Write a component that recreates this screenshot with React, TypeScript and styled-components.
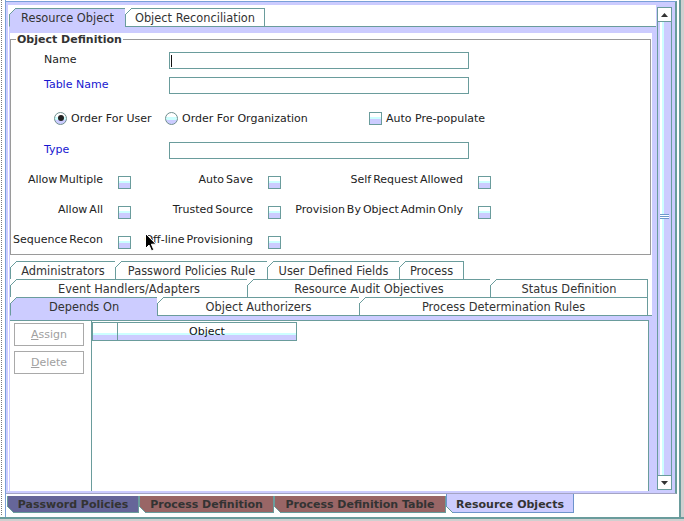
import React from 'react'
import styled, { createGlobalStyle } from 'styled-components'

const TEAL = '#6a9c9c'
const LAV = '#ccccff'
const CYAN = '#ccffff'
const BLUE = '#7aa0d8'
const ROSE = '#996666'
const SLATE = '#666699'

const GlobalStyle = createGlobalStyle`
  html, body { margin: 0; padding: 0; background: #d0d0d0; }
  body {
    font-family: 'DejaVu Sans', 'Liberation Sans', sans-serif;
    font-size: 11px;
    color: #222;
  }
`

const Screen = styled.div`
  position: relative;
  width: 684px;
  height: 521px;
  overflow: hidden;
  background: #d0d0d0;
`

const Body = styled.div`
  display: flex;
  height: 517px;
`

const Gutter = styled.div`
  width: 5px;
  background: #fff;
`

const Dots = styled.div`
  margin-left: 1px;
  width: 0;
  height: 515px;
  border-left: 1px dotted #7a7a7a;
`

const Frame = styled.div`
  box-sizing: border-box;
  width: 676px;
  border-left: 1px solid ${BLUE};
  border-right: 2px solid ${TEAL};
  background: #fff;
  display: flex;
  flex-direction: column;
`

const BottomLine = styled.div`
  height: 2px;
  background: ${TEAL};
`

const ScrollPane = styled.div`
  margin-top: 1px;
  width: 671px;
  box-sizing: border-box;
  border-top: 1px solid ${BLUE};
  border-right: 2px solid ${TEAL};
  border-bottom: 1px solid #a4a4c4;
  padding: 3px 2px 2px 2px;
  background: ${LAV};
`

const Viewport = styled.div`
  display: flex;
  height: 486px;
  background: #fff;
`

const Content = styled.div`
  width: 648px;
  height: 486px;
  overflow: hidden;
  padding-top: 3px;
  box-sizing: border-box;
`

/* ---------- tabs ---------- */

const TabRow = styled.div<{ $overlap?: boolean }>`
  display: flex;
  position: relative;
  z-index: 1;
  margin-bottom: ${p => (p.$overlap ? -1 : 0)}px;
`

const Tab = styled.div<{ $w: number; $selected?: boolean; $last?: boolean; $base?: boolean }>`
  position: relative;
  box-sizing: border-box;
  width: ${p => p.$w}px;
  height: ${p => (p.$base ? 19 : 18)}px;
  border-top: 1px solid ${TEAL};
  border-left: 1px solid ${TEAL};
  border-right: ${p => (p.$last ? `1px solid ${TEAL}` : 'none')};
  border-bottom: ${p => (p.$base ? `1px solid ${p.$selected ? LAV : TEAL}` : 'none')};
  background: ${p => (p.$selected ? LAV : '#fff')};
  display: flex;
  align-items: center;
  justify-content: center;
  font-size: 11.4px;
  color: #333;
  white-space: nowrap;
  &::before {
    content: '';
    position: absolute;
    top: -1px;
    left: -1px;
    width: 7px;
    height: 7px;
    background: linear-gradient(
      135deg,
      #fff calc(50% - 0.7px),
      ${TEAL} calc(50% - 0.7px) calc(50% + 0.5px),
      transparent calc(50% + 0.5px)
    );
  }
`

const TopTabs = styled.div`
  margin-left: 1px;
`

const Panel = styled.div<{ $band: number; $left: number; $right: number }>`
  border-top: 1px solid ${TEAL};
  background: ${LAV};
  padding: ${p => p.$band}px ${p => p.$right}px 0 ${p => p.$left}px;
`

const PanelInner = styled.div`
  background: #fff;
`

/* ---------- object definition ---------- */

const Group = styled.fieldset`
  margin: 3px 0 0 0;
  padding: 0 0 5px 0;
  width: 641px;
  box-sizing: border-box;
  min-inline-size: 0;
  border: 1px solid #9a9a9a;
`

const GroupTitle = styled.legend`
  margin-left: 5px;
  padding: 0 1px;
  font-weight: bold;
  font-size: 11px;
  line-height: 13px;
  color: #333;
`

const TextRow = styled.div<{ $top: number }>`
  display: flex;
  align-items: center;
  height: 17px;
  margin-top: ${p => p.$top}px;
`

const FieldLabel = styled.div<{ $blue?: boolean }>`
  width: 158px;
  box-sizing: border-box;
  padding-left: 33px;
  margin-top: -2px;
  color: ${p => (p.$blue ? '#1616d0' : '#222')};
`

const TextField = styled.div<{ $caret?: boolean }>`
  position: relative;
  width: 300px;
  height: 17px;
  box-sizing: border-box;
  border: 1px solid ${TEAL};
  background: #fff;
  &::after {
    content: '';
    display: ${p => (p.$caret ? 'block' : 'none')};
    position: absolute;
    left: 1px;
    top: 2px;
    width: 1px;
    height: 12px;
    background: #111;
  }
`

const OptionRow = styled.div`
  display: flex;
  align-items: center;
  height: 14px;
  margin-top: 17px;
  padding-left: 43px;
`

const Option = styled.div<{ $w?: number }>`
  display: flex;
  align-items: center;
  gap: 4px;
  width: ${p => (p.$w ? `${p.$w}px` : 'auto')};
  color: #222;
`

const Radio = styled.span<{ $on?: boolean }>`
  position: relative;
  width: 13px;
  height: 13px;
  box-sizing: border-box;
  border-radius: 50%;
  border: 1px solid #6f8f8f;
  background: linear-gradient(to bottom, #fff 0 40%, ${CYAN} 40% 60%, ${LAV} 60%);
  &::after {
    content: '';
    display: ${p => (p.$on ? 'block' : 'none')};
    position: absolute;
    left: 2.5px;
    top: 2.5px;
    width: 6px;
    height: 6px;
    border-radius: 50%;
    background: #222;
  }
`

const Check = styled.span`
  width: 13px;
  height: 13px;
  box-sizing: border-box;
  border: 1px solid ${TEAL};
  background: linear-gradient(to bottom, #fff 0 40%, ${CYAN} 40% 58%, ${LAV} 58%);
`

const CheckGrid = styled.div`
  display: grid;
  grid-template-columns: 107px 13px 137px 13px 197px 13px;
  grid-auto-rows: 13px;
  row-gap: 17px;
  margin-top: 17px;
`

const CheckLabel = styled.div`
  padding-right: 15px;
  margin-top: -3px;
  text-align: right;
  white-space: nowrap;
  word-spacing: -1.5px;
  color: #222;
  line-height: 13px;
`

/* ---------- depends on ---------- */

const LowerTabs = styled.div`
  margin-top: 6px;
`

const SplitPanel = styled.div`
  display: flex;
  height: 200px;
  border-top: 1px solid ${TEAL};
  border-right: 1px solid ${TEAL};
  background: #fff;
`

const ButtonColumn = styled.div`
  width: 82px;
  box-sizing: border-box;
  border-right: 1px solid ${TEAL};
  padding: 2px 0 0 4px;
  display: flex;
  flex-direction: column;
  gap: 5px;
`

const Button = styled.div`
  width: 70px;
  height: 23px;
  box-sizing: border-box;
  border: 1px solid #a9a9a9;
  display: flex;
  align-items: center;
  justify-content: center;
  color: #a0a0a0;
  u { text-decoration: underline; }
`

const TableArea = styled.div`
  flex: 1;
  padding-top: 1px;
`

const TableHeader = styled.div`
  display: flex;
  width: 205px;
  height: 19px;
  box-sizing: border-box;
  border: 1px solid ${TEAL};
  background: linear-gradient(to bottom, #fff 0 10px, ${CYAN} 10px 12px, ${LAV} 12px);
`

const HeaderCell = styled.div<{ $w: number; $divider?: boolean }>`
  width: ${p => p.$w}px;
  box-sizing: border-box;
  border-right: ${p => (p.$divider ? `1px solid ${TEAL}` : 'none')};
  text-align: center;
  line-height: 17px;
  color: #111;
`

/* ---------- scrollbar ---------- */

const ScrollBar = styled.div`
  width: 17px;
  box-sizing: border-box;
  padding: 2px 1px 1px 1px;
  background: ${LAV};
  display: flex;
  flex-direction: column;
`

const ArrowButton = styled.div`
  width: 15px;
  height: 15px;
  box-sizing: border-box;
  border: 1px solid ${TEAL};
  background: #fff;
  display: flex;
  align-items: center;
  justify-content: center;
`

const Thumb = styled.div`
  flex: 1;
  box-sizing: border-box;
  border-left: 1px solid ${TEAL};
  border-right: 1px solid ${TEAL};
  background: linear-gradient(
    to right,
    ${LAV} 0 2px,
    #fff 2px 4px,
    ${CYAN} 4px 6px,
    ${LAV} 6px
  );
  padding-top: 192px;
  display: flex;
  justify-content: center;
`

const Grip = styled.div`
  width: 9px;
  height: 5px;
  background: repeating-linear-gradient(to bottom, #6c98cc 0 1px, #fff 1px 2px);
`

/* ---------- window tabs ---------- */

const WindowTabs = styled.div`
  display: flex;
  align-items: flex-start;
  padding-left: 1px;
`

const WindowTab = styled.div<{ $w: number; $bg: string; $active?: boolean }>`
  position: relative;
  box-sizing: border-box;
  width: ${p => p.$w}px;
  height: ${p => (p.$active ? 19 : 17)}px;
  margin-top: ${p => (p.$active ? 0 : 2)}px;
  border-left: 1px solid ${p => (p.$active ? '#6d93cc' : TEAL)};
  border-right: 1px solid ${p => (p.$active ? '#6d93cc' : TEAL)};
  border-bottom: 1px solid ${p => (p.$active ? '#6d93cc' : TEAL)};
  background: ${p => p.$bg};
  display: flex;
  align-items: center;
  justify-content: center;
  padding-top: ${p => (p.$active ? 2 : 0)}px;
  font-weight: bold;
  font-size: 11px;
  color: #333;
  white-space: nowrap;
  &::before {
    content: '';
    position: absolute;
    bottom: -1px;
    left: -1px;
    width: 7px;
    height: 7px;
    background: linear-gradient(
      45deg,
      #fff calc(50% - 0.7px),
      ${TEAL} calc(50% - 0.7px) calc(50% + 0.5px),
      transparent calc(50% + 0.5px)
    );
  }
`

const Pointer = styled.svg`
  position: absolute;
  left: 145px;
  top: 233px;
`

const Arrow = ({ down }: { down?: boolean }) => (
  <svg width="7" height="4" viewBox="0 0 7 4">
    <path d={down ? 'M0 0 H7 L3.5 4 Z' : 'M0 4 H7 L3.5 0 Z'} fill="#333" />
  </svg>
)

const checks: [string, string, string][] = [
  ['Allow Multiple', 'Auto Save', 'Self Request Allowed'],
  ['Allow All', 'Trusted Source', 'Provision By Object Admin Only'],
  ['Sequence Recon', 'Off-line Provisioning', ''],
]

const tabRows: { label: string; w: number; selected?: boolean }[][] = [
  [
    { label: 'Administrators', w: 105 },
    { label: 'Password Policies Rule', w: 152 },
    { label: 'User Defined Fields', w: 132 },
    { label: 'Process', w: 65 },
  ],
  [
    { label: 'Event Handlers/Adapters', w: 237 },
    { label: 'Resource Audit Objectives', w: 243 },
    { label: 'Status Definition', w: 158 },
  ],
  [
    { label: 'Depends On', w: 147, selected: true },
    { label: 'Object Authorizers', w: 202 },
    { label: 'Process Determination Rules', w: 289 },
  ],
]

const windows = [
  { label: 'Password Policies', w: 132, bg: SLATE },
  { label: 'Process Definition', w: 135, bg: ROSE },
  { label: 'Process Definition Table', w: 172, bg: ROSE },
  { label: 'Resource Objects', w: 128, bg: LAV, active: true },
]

export default function App() {
  return (
    <Screen>
      <GlobalStyle />
      <Body>
        <Gutter>
          <Dots />
        </Gutter>
        <Frame>
          <ScrollPane>
            <Viewport>
              <Content>
                <TopTabs>
                  <TabRow $overlap>
                    <Tab $w={116} $base $selected>Resource Object</Tab>
                    <Tab $w={140} $base $last>Object Reconciliation</Tab>
                  </TabRow>
                  <Panel $band={3} $left={1} $right={4}>
                    <PanelInner>
                      <Group>
                        <GroupTitle>Object Definition</GroupTitle>
                        <TextRow $top={6}>
                          <FieldLabel>Name</FieldLabel>
                          <TextField $caret />
                        </TextRow>
                        <TextRow $top={8}>
                          <FieldLabel $blue>Table Name</FieldLabel>
                          <TextField />
                        </TextRow>
                        <OptionRow>
                          <Option $w={111}>
                            <Radio $on />
                            Order For User
                          </Option>
                          <Option $w={204}>
                            <Radio />
                            Order For Organization
                          </Option>
                          <Option>
                            <Check />
                            Auto Pre-populate
                          </Option>
                        </OptionRow>
                        <TextRow $top={17}>
                          <FieldLabel $blue>Type</FieldLabel>
                          <TextField />
                        </TextRow>
                        <CheckGrid>
                          {checks.map(row =>
                            row.map((label, i) => (
                              <React.Fragment key={label + i}>
                                <CheckLabel>{label}</CheckLabel>
                                {label ? <Check /> : <span />}
                              </React.Fragment>
                            ))
                          )}
                        </CheckGrid>
                      </Group>

                      <LowerTabs>
                        {tabRows.map((row, r) => (
                          <TabRow key={r} $overlap={r === 2}>
                            {row.map((t, i) => (
                              <Tab
                                key={t.label}
                                $w={t.w}
                                $selected={t.selected}
                                $last={i === row.length - 1}
                                $base={r === 2}
                              >
                                {t.label}
                              </Tab>
                            ))}
                          </TabRow>
                        ))}
                        <Panel $band={4} $left={0} $right={3}>
                          <SplitPanel>
                            <ButtonColumn>
                              <Button>
                                <u>A</u>ssign
                              </Button>
                              <Button>
                                <u>D</u>elete
                              </Button>
                            </ButtonColumn>
                            <TableArea>
                              <TableHeader>
                                <HeaderCell $w={25} $divider />
                                <HeaderCell $w={178}>Object</HeaderCell>
                              </TableHeader>
                            </TableArea>
                          </SplitPanel>
                        </Panel>
                      </LowerTabs>
                    </PanelInner>
                  </Panel>
                </TopTabs>
              </Content>
              <ScrollBar>
                <ArrowButton>
                  <Arrow />
                </ArrowButton>
                <Thumb>
                  <Grip />
                </Thumb>
                <ArrowButton>
                  <Arrow down />
                </ArrowButton>
              </ScrollBar>
            </Viewport>
          </ScrollPane>
          <WindowTabs>
            {windows.map(w => (
              <WindowTab key={w.label} $w={w.w} $bg={w.bg} $active={w.active}>
                {w.label}
              </WindowTab>
            ))}
          </WindowTabs>
        </Frame>
      </Body>
      <BottomLine />
      <Pointer width="12" height="19" viewBox="0 0 12 19">
        <path d="M0.5 0.5 L0.5 15.5 L4 12 L6.5 17.8 L8.8 16.8 L6.4 11.2 L11 11.2 Z" fill="#000" stroke="#fff" strokeWidth="1" />
      </Pointer>
    </Screen>
  )
}
